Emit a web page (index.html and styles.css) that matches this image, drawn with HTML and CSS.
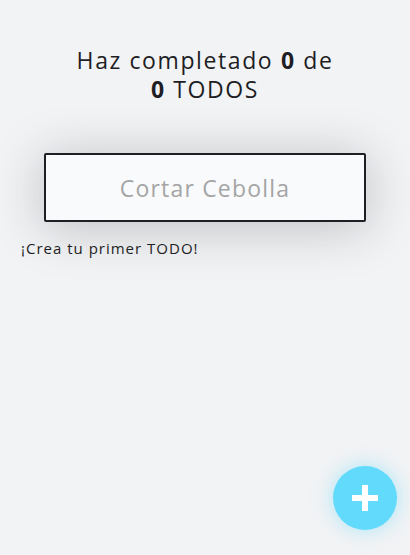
FILE: index.html
```html
<!DOCTYPE html>
<html lang="es">
<head>
<meta charset="utf-8">
<title>TODOs</title>
<link rel="stylesheet" href="styles.css">
</head>
<body>
<main class="app">
  <h1 class="counter">Haz completado <strong>0</strong> de <strong>0</strong> TODOS</h1>
  <div class="search-wrap">
    <input class="search" type="text" placeholder="Cortar Cebolla">
  </div>
  <p class="empty">¡Crea tu primer TODO!</p>
</main>
<button class="fab" aria-label="Crear TODO">
  <svg width="26" height="26" viewBox="0 0 26 26"><path d="M10 0h6v10h10v6H16v10h-6V16H0v-6h10z" fill="#fff"/></svg>
</button>
</body>
</html>
```

FILE: styles.css
```css
html, body {
  margin: 0;
  padding: 0;
  background: #f2f3f5;
  height: 100%;
}
body {
  font-family: "Open Sans", "DejaVu Sans", sans-serif;
  color: #1e1e24;
}
.app {
  display: flex;
  flex-direction: column;
}
.counter {
  margin: 46px auto 0;
  width: 266px;
  text-align: center;
  font-size: 23px;
  font-weight: 400;
  line-height: 29px;
  letter-spacing: 1.6px;
}
.counter strong {
  font-weight: 700;
}
.search-wrap {
  display: flex;
  justify-content: center;
  margin-top: 49px;
}
.search {
  box-sizing: border-box;
  width: 322px;
  height: 69px;
  border: 2px solid #1e1e24;
  border-radius: 2px;
  background: #f9fafc;
  font-family: inherit;
  font-size: 23px;
  letter-spacing: 1.2px;
  text-align: center;
  color: #1e1e24;
  box-shadow: 0 5px 50px rgba(30, 30, 36, 0.25);
  outline: none;
}
.search::placeholder {
  color: #a5a5a5;
}
.empty {
  margin: 16px 0 0 21px;
  font-size: 15px;
  letter-spacing: 1px;
  color: #1e1e24;
}
.fab {
  position: fixed;
  right: 13px;
  bottom: 25px;
  width: 64px;
  height: 64px;
  border: none;
  border-radius: 50%;
  background: #61dafb;
  box-shadow: 0 0 20px rgba(97, 218, 250, 0.5);
  display: flex;
  align-items: center;
  justify-content: center;
  padding: 0;
}
```
